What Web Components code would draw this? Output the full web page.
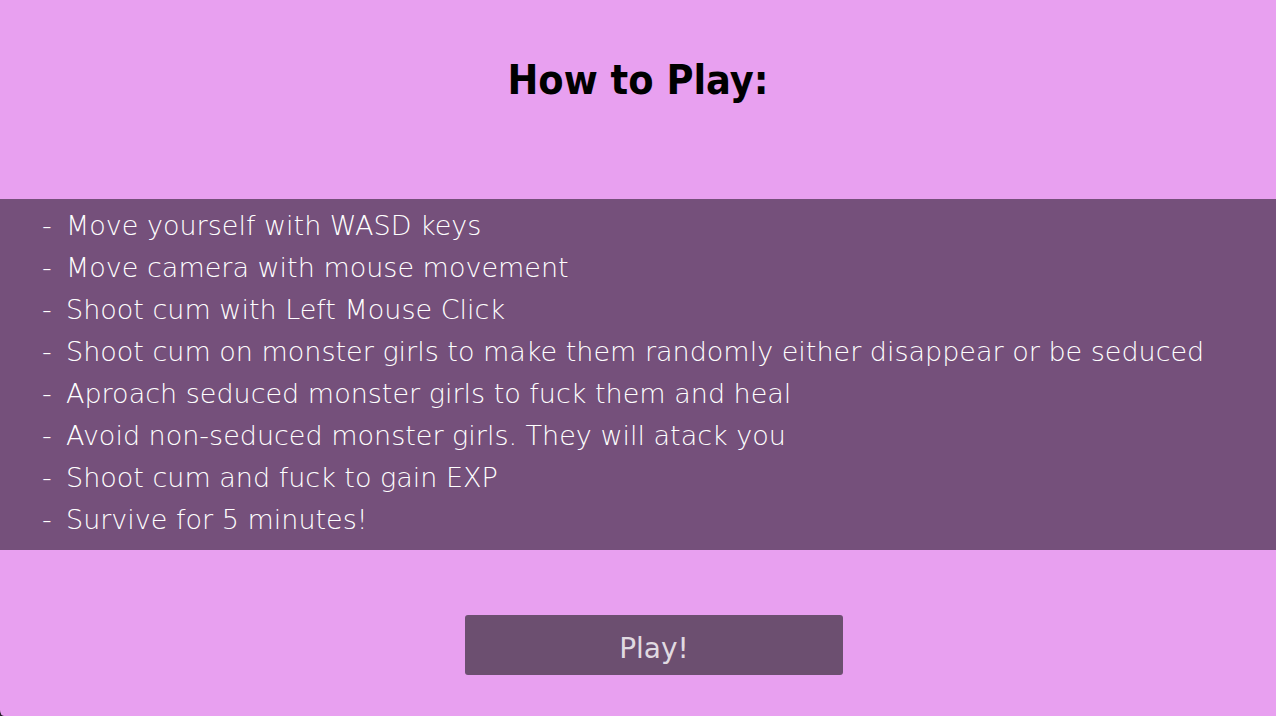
<!DOCTYPE html>
<html lang="en">
<head>
<meta charset="utf-8">
<meta name="viewport" content="width=device-width, initial-scale=1">
<title>How to Play</title>
<style>
    html {
        background: #26202a;
    }

    body {
        margin: 0;
        font-family: "DejaVu Sans", sans-serif;
    }
</style>
</head>
<body>
<how-to-play>
    <span slot="title">How to Play:</span>
    <how-to-step>Move yourself with WASD keys</how-to-step>
    <how-to-step>Move camera with mouse movement</how-to-step>
    <how-to-step>Shoot cum with Left Mouse Click</how-to-step>
    <how-to-step>Shoot cum on monster girls to make them randomly either disappear or be seduced</how-to-step>
    <how-to-step>Aproach seduced monster girls to fuck them and heal</how-to-step>
    <how-to-step>Avoid non-seduced monster girls. They will atack you</how-to-step>
    <how-to-step>Shoot cum and fuck to gain EXP</how-to-step>
    <how-to-step>Survive for 5 minutes!</how-to-step>
    <play-button slot="action">Play!</play-button>
</how-to-play>

<script>
class HowToPlay extends HTMLElement {
    constructor() {
        super();
        this.attachShadow({ mode: "open" });
    }

    connectedCallback() {
        this.render();
    }

    render() {
        this.shadowRoot.innerHTML = `
            <style>
                :host {
                    display: block;
                }

                main {
                    display: flex;
                    flex-direction: column;
                    box-sizing: border-box;
                    min-height: 100vh;
                    background: #e8a0f0;
                    border-bottom-left-radius: 4px 6px;
                }

                h1 {
                    margin: 0;
                    padding: 50px 0 89px;
                    font-family: "DejaVu Sans Condensed", "DejaVu Sans", sans-serif;
                    font-size: 41px;
                    line-height: 60px;
                    font-weight: 700;
                    text-align: center;
                    color: #000;
                }

                .steps {
                    padding: 6px 42px 9px;
                    background: #75507b;
                    color: #fff;
                }

                footer {
                    display: flex;
                    flex: 1;
                    align-items: center;
                    justify-content: center;
                    padding: 24px 0 0 32px;
                }
            </style>

            <main>
                <h1><slot name="title"></slot></h1>
                <div class="steps" role="list"><slot></slot></div>
                <footer><slot name="action"></slot></footer>
            </main>
        `;
    }
}

class HowToStep extends HTMLElement {
    constructor() {
        super();
        this.attachShadow({ mode: "open" });
    }

    connectedCallback() {
        this.setAttribute("role", "listitem");
        this.render();
    }

    render() {
        this.shadowRoot.innerHTML = `
            <style>
                :host {
                    display: grid;
                    grid-template-columns: 24px 1fr;
                    font-size: 27px;
                    font-weight: 200;
                    line-height: 42px;
                }
            </style>

            <span>-</span>
            <span><slot></slot></span>
        `;
    }
}

class PlayButton extends HTMLElement {
    constructor() {
        super();
        this.attachShadow({ mode: "open" });
    }

    connectedCallback() {
        this.render();
    }

    render() {
        this.shadowRoot.innerHTML = `
            <style>
                :host {
                    display: block;
                    width: 378px;
                    max-width: 90%;
                }

                button {
                    width: 100%;
                    height: 60px;
                    padding: 6px 0 0;
                    border: 0;
                    border-radius: 3px;
                    background: #6c4f70;
                    color: #e0dae1;
                    font: inherit;
                    font-size: 28px;
                    cursor: pointer;
                }

                button:hover {
                    background: #7b5b80;
                }
            </style>

            <button type="button"><slot></slot></button>
        `;
    }
}

customElements.define("how-to-play", HowToPlay);
customElements.define("how-to-step", HowToStep);
customElements.define("play-button", PlayButton);
</script>
</body>
</html>
